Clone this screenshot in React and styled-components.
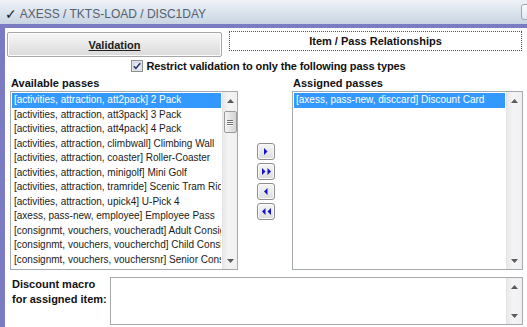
import React from "react";
import styled, { createGlobalStyle } from "styled-components";

const Global = createGlobalStyle`
  html, body { margin: 0; padding: 0; background: #fff; }
  body { font-family: "Liberation Sans", Arial, sans-serif; }
  * { box-sizing: border-box; }
`;

const Window = styled.div`
  width: 527px;
  height: 327px;
  overflow: hidden;
  display: flex;
  flex-direction: column;
  background: #fff;
`;

const TitleBar = styled.div`
  height: 24px;
  flex-shrink: 0;
  display: flex;
  align-items: center;
  padding: 3px 0 0 5px;
  background: linear-gradient(#eef2f7, #c9d5e3);
  overflow: hidden;
`;

const TitleCheck = styled.span`
  font-family: "DejaVu Sans", sans-serif;
  font-size: 14px;
  color: #1b1b1b;
  margin-right: 3px;
`;

const TitleText = styled.span`
  flex: 1;
  font-family: "Liberation Sans Narrow", "Liberation Sans", sans-serif;
  font-size: 12px;
  color: #55606e;
`;

const TitleButton = styled.div`
  width: 18px;
  height: 16px;
  margin: -4px -12px 0 0;
  border: 1px solid #9ba6b5;
  border-radius: 3px;
  background: linear-gradient(#fbfcfd, #e2e8ef);
`;

const Body = styled.div`
  flex: 1;
  display: flex;
  flex-direction: column;
  border-top: 4px solid #7b7bc4;
  border-left: 5px solid #7b7bc4;
  padding: 3px 4px 0 0;
`;

const TabRow = styled.div`
  display: flex;
  align-items: flex-start;
  height: 26px;
`;

const ActiveTab = styled.div`
  margin: 1px 0 0 2px;
  width: 215px;
  height: 25px;
  border: 1px solid #a7a7a7;
  border-radius: 2px;
  background: linear-gradient(#f7f7f7, #dadada);
  box-shadow: inset 0 0 0 1px #fdfdfd;
  display: flex;
  align-items: center;
  justify-content: center;
  font-weight: bold;
  font-size: 11px;
  color: #202020;
  text-decoration: underline;
`;

const Tab = styled.div`
  margin-left: 7px;
  width: 293px;
  height: 20px;
  border: 1px dotted #505050;
  background: #fff;
  display: flex;
  align-items: center;
  justify-content: center;
  font-weight: bold;
  font-size: 11px;
  color: #111;
`;

const CheckRow = styled.div`
  margin-top: 2px;
  height: 13px;
  display: flex;
  align-items: center;
  justify-content: center;
  gap: 3px;
  font-weight: bold;
  font-size: 11px;
  letter-spacing: -0.12px;
  color: #111;
  padding-left: 9px;
`;

const Lists = styled.div`
  margin-top: 4px;
  padding-left: 5px;
  display: grid;
  grid-template-columns: 228px 54px 231px;
  grid-template-rows: 14px 179px;
  row-gap: 1px;
`;

const Label = styled.div`
  font-weight: bold;
  font-size: 11px;
  line-height: 14px;
  color: #111;
  padding-left: ${(p) => p.$indent}px;
`;

const ListBox = styled.div`
  display: flex;
  border: 1px solid #a5a9b0;
  background: #fff;
  overflow: hidden;
`;

const Items = styled.div`
  flex: 1;
  min-width: 0;
  padding: 1px 1px;
  overflow: hidden;
`;

const Item = styled.div`
  height: 14.5px;
  line-height: 14.5px;
  padding-left: 2px;
  font-size: 10px;
  white-space: nowrap;
  overflow: hidden;
  color: ${(p) => (p.$selected ? "#fff" : "#1a1a1a")};
  background: ${(p) => (p.$selected ? "#3399ff" : "transparent")};
`;

const ScrollBar = styled.div`
  width: ${(p) => p.$w}px;
  flex-shrink: 0;
  display: flex;
  flex-direction: column;
  align-items: center;
  background: linear-gradient(90deg, #e9e9e9, #f4f4f4 40%, #f0f0f0);
  border-left: 1px solid #e4e4e4;
`;

const ArrowCell = styled.div`
  height: 17px;
  width: 100%;
  display: flex;
  align-items: center;
  justify-content: center;
`;

const Spacer = styled.div`
  flex: 1;
`;

const Thumb = styled.div`
  margin-top: 2px;
  width: 13px;
  height: 22px;
  border: 1px solid #9b9b9b;
  border-radius: 2px;
  background: linear-gradient(90deg, #f4f4f4, #e2e2e2 50%, #d4d4d4);
  display: flex;
  flex-direction: column;
  align-items: center;
  justify-content: center;
  gap: 1px;
`;

const Grip = styled.div`
  width: 6px;
  height: 1px;
  background: #6f6f6f;
  box-shadow: 0 1px 0 #f8f8f8;
`;

const ButtonColumn = styled.div`
  display: flex;
  flex-direction: column;
  gap: 3px;
  padding: 52px 0 0 19px;
`;

const MoveButton = styled.div`
  width: 18px;
  height: 17px;
  border: 1px solid #8e8e8e;
  border-radius: 3px;
  background: linear-gradient(#f6f6f6, #dcdcdc);
  box-shadow: inset 0 0 0 1px #fbfbfb;
  display: flex;
  align-items: center;
  justify-content: center;
`;

const Bottom = styled.div`
  margin-top: 7px;
  display: flex;
`;

const MacroLabel = styled.div`
  width: 105px;
  padding: 0 0 0 7px;
  font-weight: bold;
  font-size: 11px;
  line-height: 15px;
  color: #111;
`;

const MacroBox = styled.div`
  flex: 1;
  height: 48px;
  border: 1px solid #a5a9b0;
  display: flex;
  justify-content: flex-end;
`;

const Arrow = ({ dir, color = "#5a5a5a" }) => (
  <svg width="7" height="4" viewBox="0 0 7 4">
    {dir === "up" ? (
      <path d="M3.5 0 L7 4 L0 4 Z" fill={color} />
    ) : (
      <path d="M0 0 L7 0 L3.5 4 Z" fill={color} />
    )}
  </svg>
);

const MoveGlyph = ({ dir, double }) => {
  const blue = "#1515c8";
  const tri = (x) =>
    dir === "right" ? `M${x} 0 L${x + 3.5} 3.5 L${x} 7 Z` : `M${x + 3.5} 0 L${x} 3.5 L${x + 3.5} 7 Z`;
  return (
    <svg width={double ? 9 : 4} height="7" viewBox={`0 0 ${double ? 9 : 4} 7`}>
      <path d={tri(0)} fill={blue} />
      {double && <path d={tri(5.5)} fill={blue} />}
    </svg>
  );
};

const CheckBox = () => (
  <svg width="12" height="12" viewBox="0 0 12 12">
    <defs>
      <linearGradient id="cb" x1="0" y1="0" x2="1" y2="1">
        <stop offset="0" stopColor="#d8e3f0" />
        <stop offset="1" stopColor="#f7f9fc" />
      </linearGradient>
    </defs>
    <rect x="0.5" y="0.5" width="11" height="11" fill="#f4f4f4" stroke="#8e8f8f" />
    <rect x="2" y="2" width="8" height="8" fill="url(#cb)" stroke="#aebdd0" strokeWidth="0.6" />
    <path d="M2.8 6.2 L4.9 8.4 L9.2 3.2" fill="none" stroke="#27356a" strokeWidth="1.6" />
  </svg>
);

const available = [
  "[activities, attraction, att2pack] 2 Pack",
  "[activities, attraction, att3pack] 3 Pack",
  "[activities, attraction, att4pack] 4 Pack",
  "[activities, attraction, climbwall] Climbing Wall",
  "[activities, attraction, coaster] Roller-Coaster",
  "[activities, attraction, minigolf] Mini Golf",
  "[activities, attraction, tramride] Scenic Tram Ride",
  "[activities, attraction, upick4] U-Pick 4",
  "[axess, pass-new, employee] Employee Pass",
  "[consignmt, vouchers, voucheradt] Adult Consignment",
  "[consignmt, vouchers, voucherchd] Child Consignment",
  "[consignmt, vouchers, vouchersnr] Senior Consignment",
];

const assigned = ["[axess, pass-new, disccard] Discount Card"];

export default function App() {
  return (
    <>
      <Global />
      <Window>
        <TitleBar>
          <TitleCheck>✓</TitleCheck>
          <TitleText>AXESS / TKTS-LOAD / DISC1DAY</TitleText>
          <TitleButton />
        </TitleBar>
        <Body>
          <TabRow>
            <ActiveTab>Validation</ActiveTab>
            <Tab>Item / Pass Relationships</Tab>
          </TabRow>
          <CheckRow>
            <CheckBox />
            <span>Restrict validation to only the following pass types</span>
          </CheckRow>
          <Lists>
            <Label $indent={1}>Available passes</Label>
            <div />
            <Label $indent={1}>Assigned passes</Label>
            <ListBox>
              <Items>
                {available.map((t, i) => (
                  <Item key={t} $selected={i === 0}>
                    {t}
                  </Item>
                ))}
              </Items>
              <ScrollBar $w={15}>
                <ArrowCell>
                  <Arrow dir="up" />
                </ArrowCell>
                <Thumb>
                  <Grip />
                  <Grip />
                  <Grip />
                </Thumb>
                <Spacer />
                <ArrowCell>
                  <Arrow dir="down" />
                </ArrowCell>
              </ScrollBar>
            </ListBox>
            <ButtonColumn>
              <MoveButton>
                <MoveGlyph dir="right" />
              </MoveButton>
              <MoveButton>
                <MoveGlyph dir="right" double />
              </MoveButton>
              <MoveButton>
                <MoveGlyph dir="left" />
              </MoveButton>
              <MoveButton>
                <MoveGlyph dir="left" double />
              </MoveButton>
            </ButtonColumn>
            <ListBox>
              <Items>
                {assigned.map((t, i) => (
                  <Item key={t} $selected={i === 0}>
                    {t}
                  </Item>
                ))}
              </Items>
              <ScrollBar $w={16}>
                <ArrowCell>
                  <Arrow dir="up" />
                </ArrowCell>
                <Spacer />
                <ArrowCell>
                  <Arrow dir="down" />
                </ArrowCell>
              </ScrollBar>
            </ListBox>
          </Lists>
          <Bottom>
            <MacroLabel>
              Discount macro
              <br />
              for assigned item:
            </MacroLabel>
            <MacroBox>
              <ScrollBar $w={16}>
                <ArrowCell>
                  <Arrow dir="up" />
                </ArrowCell>
                <Spacer />
                <ArrowCell>
                  <Arrow dir="down" />
                </ArrowCell>
              </ScrollBar>
            </MacroBox>
          </Bottom>
        </Body>
      </Window>
    </>
  );
}
